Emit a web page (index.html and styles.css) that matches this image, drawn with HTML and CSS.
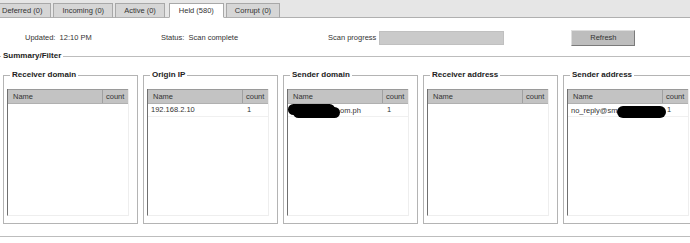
FILE: index.html
```html
<!DOCTYPE html>
<html lang="en">
<head>
    <meta charset="UTF-8">
    <meta name="viewport" content="width=device-width, initial-scale=1.0">
    <title>Mail queue</title>
    <link rel="stylesheet" href="styles.css">
</head>
<body>
    <div class="tabs">
        <div class="tab first">Deferred (0)</div>
        <div class="tab">Incoming (0)</div>
        <div class="tab">Active (0)</div>
        <div class="tab current">Held (580)</div>
        <div class="tab">Corrupt (0)</div>
    </div>
    <div class="status">
        <span class="updated">Updated:&nbsp; 12:10 PM</span>
        <span class="state">Status:&nbsp; Scan complete</span>
        <span class="scan">Scan progress</span>
        <div class="progress"></div>
        <button class="refresh">Refresh</button>
    </div>
    <fieldset class="summary">
        <legend>Summary/Filter</legend>
        <div class="boxes">
            <fieldset class="box">
                <legend>Receiver domain</legend>
                <div class="grid">
                    <div class="row head"><span class="name">Name</span><span class="count">count</span></div>
                </div>
            </fieldset>
            <fieldset class="box">
                <legend>Origin IP</legend>
                <div class="grid">
                    <div class="row head"><span class="name">Name</span><span class="count">count</span></div>
                    <div class="row"><span class="name">192.168.2.10</span><span class="count">1</span></div>
                </div>
            </fieldset>
            <fieldset class="box">
                <legend>Sender domain</legend>
                <div class="grid">
                    <div class="row head"><span class="name">Name</span><span class="count">count</span></div>
                    <div class="row"><span class="name"><i class="blob wide"></i>om.ph</span><span class="count">1</span></div>
                </div>
            </fieldset>
            <fieldset class="box">
                <legend>Receiver address</legend>
                <div class="grid">
                    <div class="row head"><span class="name">Name</span><span class="count">count</span></div>
                </div>
            </fieldset>
            <fieldset class="box">
                <legend>Sender address</legend>
                <div class="grid">
                    <div class="row head"><span class="name">Name</span><span class="count">count</span></div>
                    <div class="row"><span class="name">no_reply@sm<i class="blob short"></i></span><span class="count">1</span></div>
                </div>
            </fieldset>
        </div>
    </fieldset>
</body>
</html>
```

FILE: styles.css
```css
* {
    box-sizing: border-box;
}

body {
    margin: 0;
    width: 690px;
    height: 243px;
    overflow: hidden;
    background: #ffffff;
    font-family: "Liberation Sans", Arial, sans-serif;
    font-size: 7.5px;
    color: #333333;
}

/* tabs */
.tabs {
    display: flex;
    align-items: flex-end;
    height: 18px;
    background: #e6e6e6;
    border-bottom: 1px solid #b0b0b0;
}

.tab {
    height: 15px;
    line-height: 13px;
    padding: 0 8px;
    margin-right: 2px;
    margin-bottom: -1px;
    background: #d6d6d6;
    border: 1px solid #a8a8a8;
    border-bottom: 1px solid #b0b0b0;
    white-space: nowrap;
}

.tab.first {
    margin-left: -7px;
}

.tab.current {
    background: #ffffff;
    border-bottom-color: #ffffff;
    margin-left: 2px;
    padding: 0 9px;
}

/* status line */
.status {
    display: flex;
    align-items: center;
    height: 33px;
    padding: 6px 0 0 25px;
    white-space: nowrap;
}

.updated {
    width: 136px;
}

.state {
    width: 167px;
}

.progress {
    width: 125px;
    height: 14px;
    margin-left: 3px;
    background: #cacaca;
    border: 1px solid #c0c0c0;
}

.refresh {
    width: 64px;
    height: 16px;
    margin-left: 67px;
    padding: 0;
    font: 7.5px "Liberation Sans", Arial, sans-serif;
    color: #333333;
    background: #bdbdbd;
    border: 1px solid;
    border-color: #dedede #7a7a7a #7a7a7a #dedede;
}

/* summary */
legend {
    font-size: 8px;
    font-weight: bold;
    line-height: 10px;
    color: #222222;
    padding: 0 2px;
}

.summary {
    margin: 0;
    padding: 9px 0 12px 3px;
    border: none;
    border-top: 1px solid #bdbdbd;
    border-bottom: 1px solid #bdbdbd;
    min-width: 0;
}

.summary > legend {
    margin-left: -2px;
}

.boxes {
    display: flex;
    gap: 5px;
}

.box {
    flex: 0 0 135px;
    width: 135px;
    margin: 0;
    padding: 9px 8px 7px 3px;
    border: 1px solid #b4b4b4;
    min-width: 0;
}

.box > legend {
    margin-left: 3px;
}

.grid {
    height: 127px;
    border-left: 1px solid #707070;
    border-right: 1px solid #eeeeee;
    border-bottom: 1px solid #eeeeee;
}

.row {
    display: flex;
    height: 13px;
    line-height: 12px;
    border-bottom: 1px solid #f0f0f0;
    white-space: nowrap;
}

.row.head {
    height: 15px;
    line-height: 13px;
    background: #c3c3c3;
    border-top: 1px solid #9a9a9a;
    border-bottom: 1px solid #b0b0b0;
}

.name {
    width: 94px;
    padding-left: 3px;
}

.head .name {
    padding-left: 5px;
}

.count {
    flex: 1;
    padding-left: 5px;
}

.head .count {
    border-left: 1px solid #a0a0a0;
    padding-left: 3px;
}

/* blacked-out parts of the addresses */
.blob {
    display: inline-block;
    vertical-align: middle;
    background: #000000;
    border-radius: 7px;
}

.blob.wide {
    width: 47px;
    height: 11px;
    margin: 3px 0 0 2px;
    border-radius: 6px;
    box-shadow: -5px -3px 0 0 #000000;
}

.blob.short {
    width: 49px;
    height: 12px;
    margin-top: 2px;
}
```
